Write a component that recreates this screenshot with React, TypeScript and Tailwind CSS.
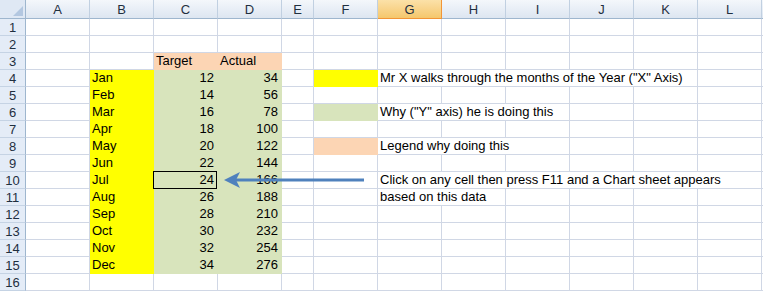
import React from "react"

type Fill = "none" | "yellow" | "green" | "peach"

type Cell = {
  text?: string
  fill?: Fill
  right?: boolean
  span?: number
  selected?: boolean
}

const cols = ["A", "B", "C", "D", "E", "F", "G", "H", "I", "J", "K", "L"]

const months = ["Jan", "Feb", "Mar", "Apr", "May", "Jun", "Jul", "Aug", "Sep", "Oct", "Nov", "Dec"]
const target = [12, 14, 16, 18, 20, 22, 24, 26, 28, 30, 32, 34]
const actual = [34, 56, 78, 100, 122, 144, 166, 188, 210, 232, 254, 276]

// notes in column G, with how many columns the overflowing text covers
const notes: Record<number, { text: string; span: number }> = {
  4: { text: 'Mr X walks through the months of the Year ("X" Axis)', span: 5 },
  6: { text: 'Why ("Y" axis) he is doing this', span: 3 },
  8: { text: "Legend why doing this", span: 3 },
  10: { text: "Click on any cell then press F11 and a Chart sheet appears", span: 6 },
  11: { text: "based on this data", span: 2 },
}

const legend: Record<number, Fill> = { 4: "yellow", 6: "green", 8: "peach" }

const fillClass: Record<Fill, string> = {
  none: "border-[#d0d7e5]",
  yellow: "bg-[#ffff00] border-[#ffff00]",
  green: "bg-[#d8e4bc] border-[#d8e4bc]",
  peach: "bg-[#fcd5b4] border-[#fcd5b4]",
}

function buildRow(r: number): Cell[] {
  const cells: Cell[] = []
  cells.push({}) // A
  const m = r - 4
  const inData = m >= 0 && m < 12
  cells.push(inData ? { text: months[m], fill: "yellow" } : {})
  if (r === 3) {
    cells.push({ text: "Target", fill: "peach" })
    cells.push({ text: "Actual", fill: "peach" })
  } else if (inData) {
    cells.push({ text: String(target[m]), fill: "green", right: true, selected: r === 10 })
    cells.push({ text: String(actual[m]), fill: "green", right: true })
  } else {
    cells.push({}, {})
  }
  cells.push({}) // E
  cells.push(legend[r] ? { fill: legend[r] } : {})
  const note = notes[r]
  if (note) {
    cells.push({ text: note.text, span: note.span })
    for (let i = note.span; i < 6; i++) cells.push({})
  } else {
    for (let i = 0; i < 6; i++) cells.push({})
  }
  return cells
}

const spanClass: Record<number, string> = {
  1: "",
  2: "col-span-2",
  3: "col-span-3",
  5: "col-span-5",
  6: "col-span-6",
}

function DataCell({ cell }: { cell: Cell }) {
  const fill = cell.fill ?? "none"
  return (
    <div
      className={`relative h-[17px] border-r border-b whitespace-nowrap leading-[16px] ${fillClass[fill]} ${
        spanClass[cell.span ?? 1]
      } ${cell.right ? "pr-[3px] text-right" : "pl-[2px]"}`}
    >
      {cell.text}
      {cell.selected && <div className="absolute -left-px -top-px right-0 -bottom-px border border-black" />}
    </div>
  )
}

export default function App() {
  const rows = Array.from({ length: 16 }, (_, i) => i + 1)

  return (
    <div className="relative h-[291px] w-[763px] overflow-hidden bg-white font-['Liberation_Sans',Arial,sans-serif] text-[13px] text-black">
      <div className="grid grid-cols-[26px_64px_64px_64px_64px_32px_64px_64px_64px_64px_64px_64px_64px_1fr]">
        {/* corner */}
        <div className="relative h-[19px] border-r border-b border-[#9eb6ce] bg-[#dfe8f4]">
          <svg className="absolute right-[2px] bottom-[2px]" width="10" height="10" viewBox="0 0 10 10">
            <path d="M10 0 L10 10 L0 10 Z" fill="#b3c7e0" />
          </svg>
        </div>
        {cols.map((c) => (
          <div
            key={c}
            className={`flex h-[19px] items-center justify-center border-r border-b leading-none ${
              c === "G"
                ? "bg-linear-to-b from-[#fbe1a8] to-[#f5c76c] border-[#f29536] text-[#1f2f3f]"
                : "bg-linear-to-b from-[#f4f7fb] to-[#dde6f1] border-r-[#c1d0e1] border-b-[#9eb6ce] text-[#1f2f3f]"
            }`}
          >
            {c}
          </div>
        ))}
        <div className="h-[19px] border-b border-[#9eb6ce] bg-linear-to-b from-[#f4f7fb] to-[#dde6f1]" />

        {rows.map((r) => (
          <React.Fragment key={r}>
            <div className="flex h-[17px] items-center justify-center border-r border-b border-r-[#9eb6ce] border-b-[#c5d3e4] bg-[#e4ecf7] leading-none text-[#1f2f3f]">
              {r}
            </div>
            {buildRow(r).map((cell, i) => (
              <DataCell key={i} cell={cell} />
            ))}
            <div className="h-[17px] border-b border-[#d0d7e5]" />
          </React.Fragment>
        ))}
      </div>

      {/* arrow pointing at the selected cell */}
      <svg className="absolute left-0 top-0" width="763" height="291" viewBox="0 0 763 291">
        <line x1="234" y1="180" x2="364" y2="180" stroke="#4f81bd" strokeWidth="3" />
        <path d="M224 180 L240 172 L236 180 L240 188 Z" fill="#4f81bd" />
      </svg>
    </div>
  )
}
